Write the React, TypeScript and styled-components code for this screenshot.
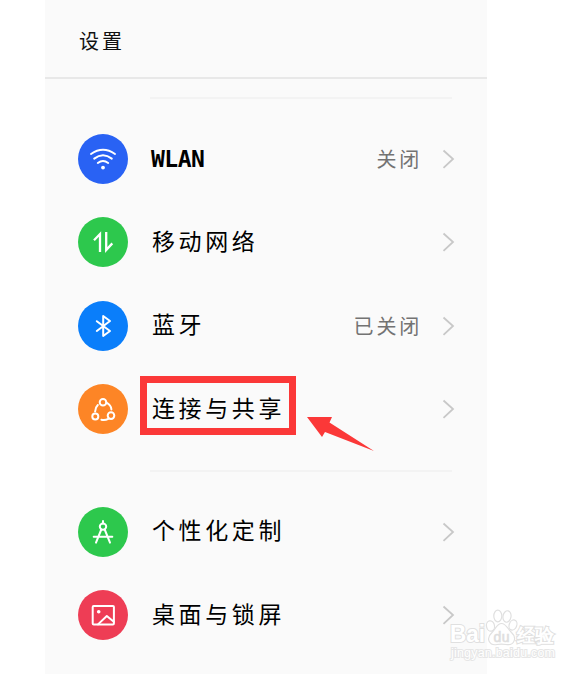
import React from 'react';
import styled, { createGlobalStyle } from 'styled-components';

const GlobalStyle = createGlobalStyle`
  * { box-sizing: border-box; }
  body { margin: 0; background: #fff; overflow: hidden; }
`;

const Page = styled.div`
  position: relative;
  width: 588px;
  height: 674px;
  padding-left: 45px;
  overflow: hidden;
  background: #fff;
  font-family: 'Noto Sans CJK SC', sans-serif;
`;

const Phone = styled.main`
  width: 442px;
  height: 674px;
  overflow: hidden;
  background: #fafafa;
`;

const Header = styled.header`
  display: flex;
  align-items: center;
  height: 79px;
  padding: 4px 0 0 34px;
  border-bottom: 2px solid #e8e8e8;
`;

const Title = styled.h1`
  margin: 0;
  color: #111;
  font-size: 20px;
  font-weight: 400;
  letter-spacing: 3px;
`;

const Divider = styled.hr<{ $top: number; $bottom: number }>`
  width: 302px;
  height: 2px;
  margin: ${p => p.$top}px 0 ${p => p.$bottom}px 105px;
  border: 0;
  background: #f3f3f3;
`;

const Row = styled.div`
  display: flex;
  align-items: center;
  height: 83.5px;
  padding: 0 32px 0 33px;
`;

const Badge = styled.span<{ $color: string }>`
  flex: none;
  width: 50px;
  height: 50px;
  border-radius: 50%;
  background: ${p => p.$color};
  svg { display: block; }
`;

const Label = styled.span<{ $latin?: boolean }>`
  position: relative;
  margin-left: ${p => (p.$latin ? 23 : 24)}px;
  margin-bottom: ${p => (p.$latin ? 0 : 5)}px;
  color: #000;
  font-family: ${p => (p.$latin ? "'DejaVu Sans Mono', monospace" : 'inherit')};
  font-size: 23px;
  font-weight: ${p => (p.$latin ? 700 : 400)};
  line-height: 34px;
  letter-spacing: ${p => (p.$latin ? -0.5 : 3.6)}px;
`;

const Highlight = styled.span`
  position: absolute;
  left: -12px;
  top: -14px;
  width: 156px;
  height: 59px;
  border: 7px solid #fb3838;
`;

const Status = styled.span`
  margin-left: auto;
  margin-right: 19px;
  color: #737373;
  font-size: 20px;
  line-height: 30px;
  letter-spacing: 2.8px;
`;

const Chevron = styled.svg<{ $push: boolean }>`
  flex: none;
  margin-left: ${p => (p.$push ? 'auto' : '0')};
`;

const Arrow = styled.svg`
  position: absolute;
  left: 306px;
  top: 415px;
`;

const Watermark = styled.svg`
  position: absolute;
  left: 448px;
  top: 606px;
`;

const icons = {
  wifi: (
    <>
      <path d="M13 20 Q25 11.5 37 20M16.2 24.6 Q25 18 33.8 24.6M19.8 29 Q25 25 30.2 29" />
      <circle cx="25" cy="33.6" r="1.9" fill="#fff" stroke="none" />
    </>
  ),
  mobile: <path d="M16 23.3 22 17V35M28.2 15V33L34.3 26.4" strokeWidth="2.3" strokeLinejoin="miter" strokeLinecap="butt" />,
  bluetooth: <path d="M18.8 20.2 32 30 25.2 35V15L32 20 18.8 30" />,
  share: (
    <>
      <circle cx="25" cy="18.3" r="3.3" />
      <circle cx="17.3" cy="32.4" r="3" />
      <circle cx="33" cy="31.6" r="3.3" />
      <path d="M28.5 18.7Q33 21 33.4 25.4M19.8 21Q17.2 23.5 17.1 27.5M23.4 35.7Q27 36.6 30.3 34.8" />
    </>
  ),
  compass: (
    <>
      <circle cx="25" cy="19.6" r="3.2" />
      <path d="M25 14V16.4M23.3 22.5 18 35.6M26.7 22.5 32 35.6M15.7 29.8H34.3" />
    </>
  ),
  picture: (
    <>
      <rect x="14.7" y="16" width="21.2" height="18.6" rx="1" />
      <path d="M20 34.4 28.8 26 35.8 31.8" />
      <circle cx="20.7" cy="21.8" r="1.8" fill="#fff" stroke="none" />
    </>
  ),
};

interface ItemProps {
  icon?: keyof typeof icons;
  color: string;
  label?: string;
  status?: string;
  latin?: boolean;
  highlighted?: boolean;
}

function Item({ icon, color, label, status, latin, highlighted }: ItemProps) {
  return (
    <Row>
      <Badge $color={color}>
        {icon && (
          <svg width="50" height="50" viewBox="0 0 50 50" fill="none" stroke="#fff" strokeWidth="2" strokeLinecap="round" strokeLinejoin="round">
            {icons[icon]}
          </svg>
        )}
      </Badge>
      {label && (
        <Label $latin={latin}>
          {label}
          {highlighted && <Highlight />}
        </Label>
      )}
      {status && <Status>{status}</Status>}
      {label && (
        <Chevron $push={!status} width="14" height="22" viewBox="0 0 14 22" fill="none" stroke="#c8c8c8" strokeWidth="1.8">
          <path d="M2.5 2.5 12 11 2.5 19.8" />
        </Chevron>
      )}
    </Row>
  );
}

export default function App() {
  return (
    <>
      <GlobalStyle />
      <Page>
        <Phone>
          <Header>
            <Title>设置</Title>
          </Header>
          <Divider $top={18} $bottom={17.75} />
          <Item icon="wifi" color="#2962f4" label="WLAN" status="关闭" latin />
          <Item icon="mobile" color="#2dc84d" label="移动网络" />
          <Item icon="bluetooth" color="#0a7efa" label="蓝牙" status="已关闭" />
          <Item icon="share" color="#fd8526" label="连接与共享" highlighted />
          <Divider $top={19} $bottom={18} />
          <Item icon="compass" color="#2dc84d" label="个性化定制" />
          <Item icon="picture" color="#ee3d55" label="桌面与锁屏" />
          <Item color="#f5d04c" />
        </Phone>
        <Arrow width="70" height="40" viewBox="0 0 70 40">
          <path d="M1 2H26L23.5 7.5 68 36 19 17 16 22Z" fill="#fb3838" />
        </Arrow>
        <Watermark width="116" height="58" viewBox="0 0 116 58" fill="#fff" stroke="#e0e0e0" strokeWidth="1.2">
          <g fontFamily="'Liberation Sans', sans-serif" fontWeight="700" paintOrder="stroke" strokeWidth="2">
            <text x="2" y="36" fontSize="24" textLength="35" lengthAdjust="spacingAndGlyphs">Bai</text>
            <text x="69" y="36" fontSize="18.500" textLength="37">经验</text>
            <text x="3" y="51" fontSize="12.500" fontWeight="400" textLength="104" stroke="#e6e6e6">jingyan.baidu.com</text>
          </g>
          <ellipse cx="42.5" cy="20" rx="4" ry="5.2" transform="rotate(-12 42.5 20)" />
          <ellipse cx="49.8" cy="10" rx="4" ry="5.8" />
          <ellipse cx="59" cy="10.5" rx="4" ry="5.8" transform="rotate(10 59 10.5)" />
          <ellipse cx="65" cy="19" rx="3.8" ry="5.2" transform="rotate(20 65 19)" />
          <path d="M53.5 17.5C49 17.5 47.5 23 44 26.5C37 33 42 40 49 38.500C52 38 55 38 58 38.500C66 40 69.500 32 63.500 26.500C60 23 58 17.500 53.500 17.500Z" />
          <text x="45.500" y="35.5" fontSize="14" fontWeight="400" fontFamily="'Liberation Sans', sans-serif" textLength="16" fill="#dcdcdc" strokeWidth="0.6">du</text>
        </Watermark>
      </Page>
    </>
  );
}
